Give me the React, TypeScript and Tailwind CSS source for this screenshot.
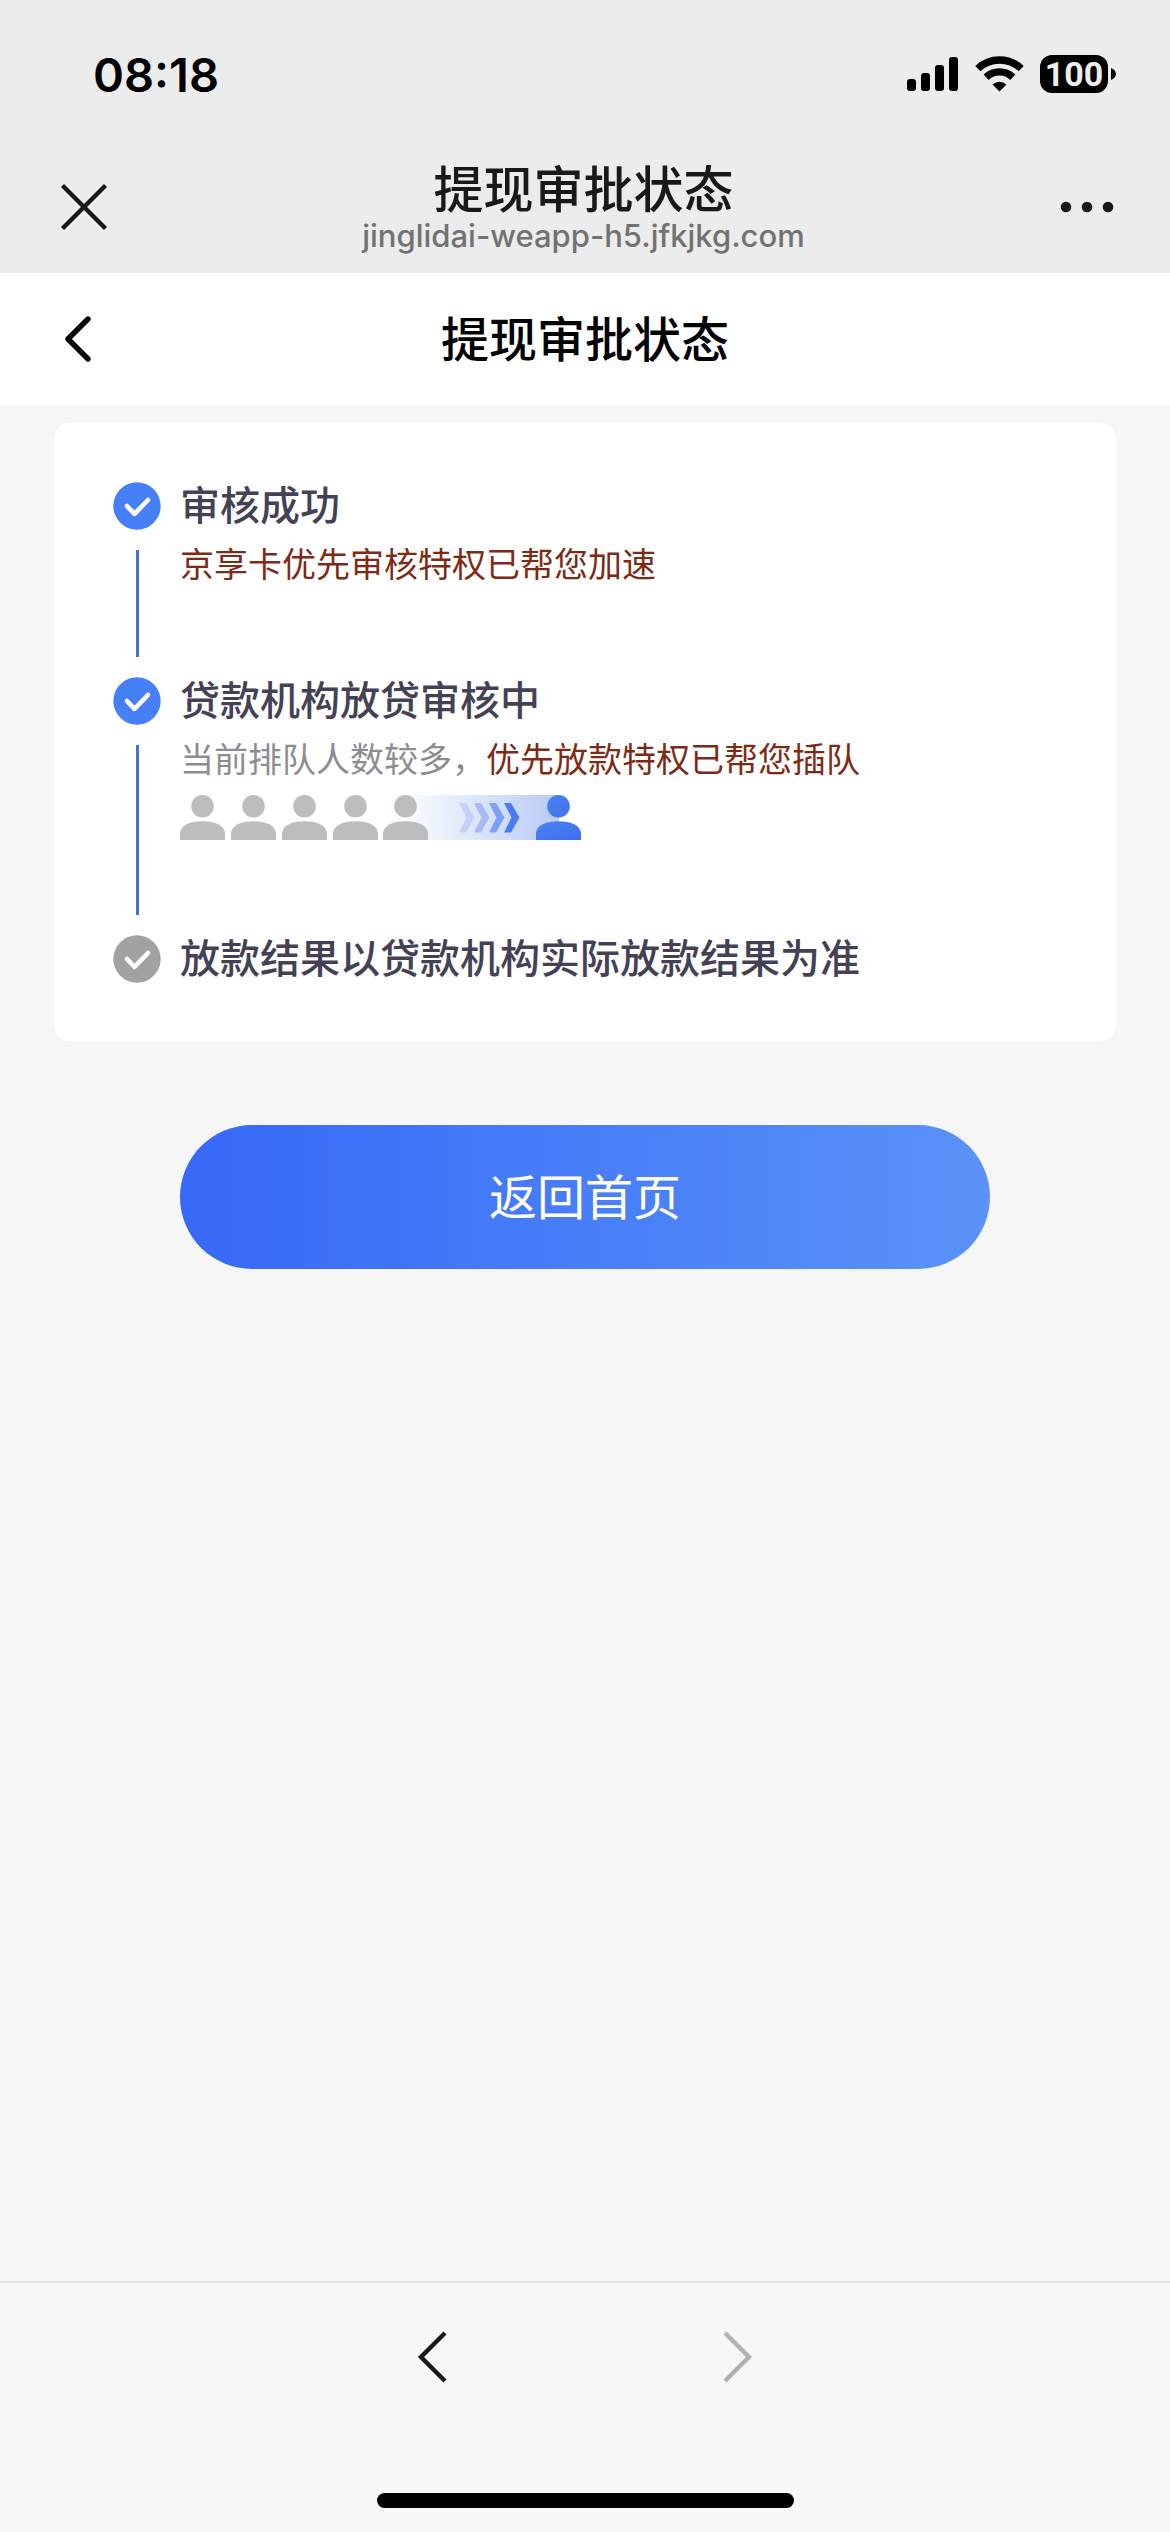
import type { ReactNode } from "react";

const CheckCircle = ({ done }: { done: boolean }) => (
  <svg className="size-12 shrink-0" viewBox="0 0 48 48" aria-hidden="true">
    <circle cx="24" cy="24" r="23.7" fill={done ? "#4680f8" : "#a2a2a2"} />
    <path
      d="M14 24 L21.5 31.8 L35 18"
      fill="none"
      stroke="#fff"
      strokeWidth="4.6"
      strokeLinecap="round"
      strokeLinejoin="round"
    />
  </svg>
);

const Person = ({ x, fill }: { x: number; fill: string }) => (
  <g transform={`translate(${x} 0)`} fill={fill}>
    <circle cx="22.5" cy="11.3" r="11.3" />
    <path d="M0 45 V38 C1 30 10 26.2 22.5 26.2 C35 26.2 44 30 45 38 V45 Z" />
  </g>
);

const chevrons = [
  { x: 279, fill: "#c6d0f6" },
  { x: 294, fill: "#a9b9f4" },
  { x: 309, fill: "#7f9ff2" },
  { x: 324, fill: "#4b7bf0" },
];

const Queue = () => (
  <svg className="block h-[45px] w-[401px]" viewBox="0 0 401 45" role="img" aria-label="排队">
    <defs>
      <linearGradient id="lane" x1="0" x2="1" y1="0" y2="0">
        <stop offset="0" stopColor="#fff" />
        <stop offset="0.25" stopColor="#f1f5fe" />
        <stop offset="0.5" stopColor="#dde7fb" />
        <stop offset="1" stopColor="#b9caf3" />
      </linearGradient>
      <linearGradient id="leader" x1="0" x2="1" y1="0" y2="1">
        <stop offset="0" stopColor="#4b82f2" />
        <stop offset="1" stopColor="#3d70f0" />
      </linearGradient>
    </defs>
    <path d="M204 0 H379 V45 H204 Z" fill="url(#lane)" />
    {[0, 51, 102, 153, 203].map((x) => (
      <Person key={x} x={x} fill="#bdbdbf" />
    ))}
    {chevrons.map((c) => (
      <path
        key={c.x}
        transform={`translate(${c.x} 8)`}
        d="M0 0 H7 L15.5 14.5 L7 29.5 H0 L7.5 14.5 Z"
        fill={c.fill}
      />
    ))}
    <Person x={356} fill="url(#leader)" />
  </svg>
);

type Step = { title: string; done: boolean; body?: ReactNode };

const steps: Step[] = [
  {
    title: "审核成功",
    done: true,
    body: (
      <div className="pt-[18px] pb-[93px]">
        <p className="text-[34px] leading-[42px] text-[#7e2a14]">京享卡优先审核特权已帮您加速</p>
      </div>
    ),
  },
  {
    title: "贷款机构放贷审核中",
    done: true,
    body: (
      <div className="pt-[18px] pb-[95px]">
        <p className="mb-4 text-[34px] leading-[42px] text-[#8d8c93]">
          当前排队人数较多，<span className="text-[#7e2a14]">优先放款特权已帮您插队</span>
        </p>
        <Queue />
      </div>
    ),
  },
  { title: "放款结果以贷款机构实际放款结果为准", done: false },
];

const StatusBar = () => (
  <div className="flex h-[148px] items-center justify-between pr-[54px] pl-[93px] text-black">
    <time className="font-['Inter'] text-[47px] leading-none font-semibold">08:18</time>
    <div className="flex items-center">
      <svg className="h-[38px] w-[52px]" viewBox="0 0 52 38" aria-label="信号">
        <rect x="0" y="24" width="9" height="12" rx="3" />
        <rect x="14" y="18" width="9" height="18" rx="3" />
        <rect x="28" y="10" width="9" height="26" rx="3" />
        <rect x="42" y="2" width="9" height="34" rx="3" />
      </svg>
      <svg className="ml-4 h-[38px] w-[50px]" viewBox="0 0 50 38" fill="none" stroke="#000" strokeWidth="7.4" aria-label="无线网络">
        <path d="M2.8 13.6 A31.5 31.5 0 0 1 46.2 13.6" />
        <path d="M11.2 22.2 A19.4 19.4 0 0 1 37.8 22.2" />
        <path d="M24.5 36.5 L17.5 29.5 A10 10 0 0 1 31.5 29.5 Z" fill="#000" stroke="none" />
      </svg>
      <div className="ml-[15px] flex h-[38px] w-[68px] items-center justify-center rounded-xl bg-black font-['Roboto'] text-[34px] leading-none font-bold text-[#ececec]">
        100
      </div>
      <svg className="ml-[3px] h-3 w-[5px]" viewBox="0 0 5 12" aria-hidden="true">
        <path d="M0 0 C6.5 2.5 6.5 9.5 0 12 Z" />
      </svg>
    </div>
  </div>
);

const TitleBar = () => (
  <div className="flex h-[125px] items-start justify-between pr-[53px] pl-[58px]">
    <button type="button" aria-label="关闭" className="mt-[33px]">
      <svg className="size-[52px]" viewBox="0 0 52 52" fill="none" stroke="#191919" strokeWidth="4.4">
        <path d="M4.5 4.5 L47.5 47.5 M47.5 4.5 L4.5 47.5" />
      </svg>
    </button>
    <div className="flex flex-col items-center pt-2">
      <h1 className="text-[50px] leading-[60px] font-medium text-[#191919]">提现审批状态</h1>
      <p className="mt-1 font-['Inter'] text-[31px] leading-8 font-medium text-[#727272]">jinglidai-weapp-h5.jfkjkg.com</p>
    </div>
    <button type="button" aria-label="更多" className="mt-[33px]">
      <svg className="h-[52px] w-[60px]" viewBox="0 0 60 52" fill="#191919">
        <circle cx="9" cy="26" r="5.3" />
        <circle cx="30" cy="26" r="5.3" />
        <circle cx="51" cy="26" r="5.3" />
      </svg>
    </button>
  </div>
);

export default function App() {
  return (
    <div className="flex min-h-screen flex-col bg-[#f6f6f6] font-['Noto_Sans_CJK_SC',sans-serif]">
      <header className="bg-[#ececec]">
        <StatusBar />
        <TitleBar />
      </header>

      <nav className="grid h-[132px] grid-cols-[1fr_auto_1fr] items-center bg-white px-[60px]">
        <button type="button" aria-label="返回" className="justify-self-start">
          <svg className="h-[52px] w-9" viewBox="0 0 36 52" fill="none" stroke="#000" strokeWidth="5.4" strokeLinecap="round" strokeLinejoin="round">
            <path d="M28 6 L8 26 L28 46" />
          </svg>
        </button>
        <h2 className="pb-1.5 text-[48px] leading-[60px] font-medium text-black">提现审批状态</h2>
      </nav>

      <main className="flex-1">
        <ol className="mx-[54px] mt-[18px] rounded-2xl bg-white px-[59px] pt-[59px] pb-[58px]">
          {steps.map((step) => (
            <li key={step.title} className="flex gap-[19px]">
              <div className="flex flex-col items-center">
                <CheckCircle done={step.done} />
                {step.body && <span className="my-5 w-[3px] flex-1 bg-[#456de0]" />}
              </div>
              <div>
                <h3 className="text-[40px] leading-[42px] font-medium text-[#444155]">{step.title}</h3>
                {step.body}
              </div>
            </li>
          ))}
        </ol>
        <div className="px-[180px] pt-[84px]">
          <button
            type="button"
            className="h-36 w-full rounded-full bg-linear-to-r from-[#3768f7] to-[#5b92f8] pb-1.5 text-[48px] leading-none text-white"
          >
            返回首页
          </button>
        </div>
      </main>

      <footer className="flex h-[251px] flex-col items-center justify-between border-t-2 border-[#dedede] bg-[#f7f7f7] pt-[46px] pb-6">
        <div className="flex gap-[266px]">
          <button type="button" aria-label="后退">
            <svg className="h-[56px] w-9" viewBox="0 0 36 56" fill="none" stroke="#191919" strokeWidth="4.4">
              <path d="M29 4 L5 28 L29 52" />
            </svg>
          </button>
          <button type="button" aria-label="前进" disabled>
            <svg className="h-[56px] w-9" viewBox="0 0 36 56" fill="none" stroke="#b2b2b2" strokeWidth="4.4">
              <path d="M7 4 L31 28 L7 52" />
            </svg>
          </button>
        </div>
        <div className="h-[15px] w-[417px] rounded-full bg-black" />
      </footer>
    </div>
  );
}
